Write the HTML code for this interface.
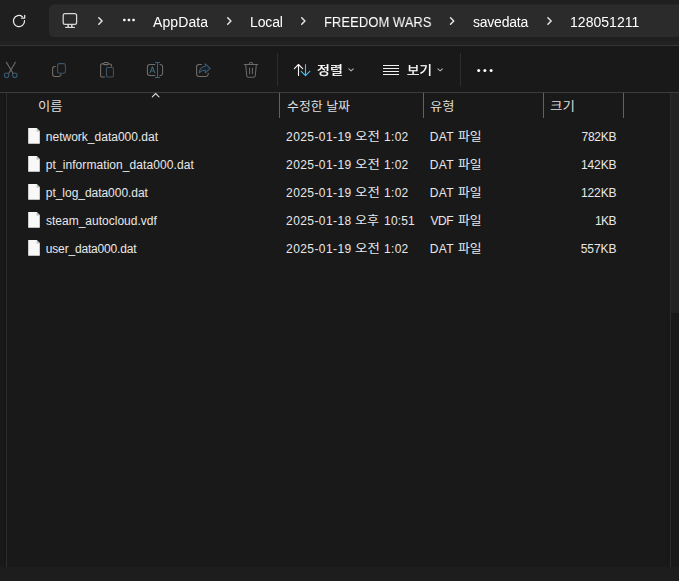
<!DOCTYPE html>
<html lang="ko"><head><meta charset="utf-8"><title>savedata</title>
<style>
html,body{margin:0;padding:0;}
body{width:679px;height:581px;overflow:hidden;background:#191919;position:relative;
 font-family:"Liberation Sans","Noto Sans CJK KR","NanumGothic",sans-serif;color:#fff;font-size:12px;}
.abs{position:absolute;}
.t{position:absolute;white-space:nowrap;line-height:16px;height:16px;}
.g{will-change:transform;}
.k{-webkit-text-stroke:0.25px #fff;}
</style></head><body>
<div class="abs" style="left:0;top:0;width:679px;height:45px;background:#1f1f1f"></div>
<div class="abs" style="left:0;top:41px;width:679px;height:4px;background:#222222"></div>
<div class="abs" style="left:49px;top:4px;width:640px;height:33px;background:#2b2b2b;border-radius:5px;box-sizing:border-box;border-top:1px solid #262626"></div>
<!-- refresh -->
<svg class="abs" style="left:9px;top:11px" width="20" height="20" viewBox="9 11 20 20" fill="none" stroke="#ececec" stroke-width="1.25" stroke-linecap="round" stroke-linejoin="round"><path d="M24.500 20.600A5.550 5.550 0 1 1 22.400 16.700"/><path d="M24.700 15.300v2.800h-3.200"/></svg>
<!-- monitor -->
<svg class="abs" style="left:60px;top:10px" width="22" height="22" viewBox="60 10 22 22" fill="none" stroke="#d8d8d8" stroke-width="1.25" stroke-linejoin="round"><rect x="63.200" y="13.500" width="13.400" height="10.900" rx="1.900"/><path d="M68.200 24.600v2.400M71.800 24.600v2.400" stroke-width="1.500"/><path d="M65.100 27.400h9.800" stroke-width="1.200"/></svg>
<!-- chevrons -->
<svg class="abs" style="left:0;top:0" width="679" height="45" viewBox="0 0 679 45" fill="none" stroke="#e6e6e6" stroke-width="1.450" stroke-linecap="round" stroke-linejoin="round">
<path d="M98.800 17.800l3.250 3.200-3.250 3.200"/>
<path d="M227.700 17.800l3.250 3.200-3.250 3.200"/>
<path d="M301.700 17.800l3.250 3.200-3.250 3.200"/>
<path d="M450.500 17.800l3.250 3.200-3.250 3.200"/>
<path d="M547.900 17.800l3.250 3.200-3.250 3.200"/>
<g fill="#f4f4f4" stroke="none"><rect x="123.100" y="18.850" width="2.500" height="2.400" rx="0.700"/><rect x="127.700" y="18.850" width="2.500" height="2.400" rx="0.700"/><rect x="132.300" y="18.850" width="2.500" height="2.400" rx="0.700"/></g>
</svg>
<div class="abs" style="left:0;top:45px;width:679px;height:1px;background:#363636"></div>
<div class="abs" style="left:0;top:92px;width:679px;height:1px;background:#3c3c3c"></div>
<!-- toolbar separators -->
<div class="abs" style="left:277px;top:53px;width:1px;height:33px;background:#2e2e2e"></div>
<div class="abs" style="left:460px;top:53px;width:1px;height:33px;background:#2e2e2e"></div>
<!-- toolbar icons -->
<svg class="abs" style="left:0;top:46px" width="679" height="46" viewBox="0 46 679 46" fill="none" stroke-width="1.050" stroke-linecap="round" stroke-linejoin="round">
<!-- cut -->
<g stroke="#707070"><path d="M6.400 62.300l6.700 11.100M15.400 62.300L8.700 73.400"/></g>
<g stroke="#37586d" stroke-width="1.150"><circle cx="6.600" cy="75.200" r="2.250"/><circle cx="14.800" cy="75.200" r="2.250"/></g>
<!-- copy -->
<path stroke="#736f6b" d="M55.300 66.500h-0.500a2.200 2.200 0 0 0-2.200 2.200v5.300a2.400 2.400 0 0 0 2.400 2.400h3.900a2.200 2.200 0 0 0 2.200-2"/>
<rect stroke="#3d5566" x="57.600" y="63.600" width="7.800" height="9.700" rx="1.900"/>
<!-- paste -->
<path stroke="#736f6b" d="M104.600 77h-2.700a1.300 1.300 0 0 1-1.300-1.300v-10.500a1.300 1.300 0 0 1 1.300-1.300h1.500M108.600 63.900h1.500a1.300 1.300 0 0 1 1.300 1.300v1.100"/>
<rect stroke="#736f6b" x="103.700" y="62.500" width="4.600" height="2.100" rx="1.050"/>
<rect stroke="#3d5566" x="106.500" y="67.400" width="6.900" height="9.600" rx="1.200"/>
<!-- rename -->
<path stroke="#736f6b" d="M154.800 64.500h-5a2.400 2.400 0 0 0-2.400 2.400v6.200a2.400 2.400 0 0 0 2.400 2.400h5M160 64.500h0.200a2.400 2.400 0 0 1 2.400 2.400v6.200a2.400 2.400 0 0 1-2.400 2.400h-0.200"/>
<path stroke="#3e6170" d="M157.500 62.600v14.800M155.400 62.400h4.200M155.400 77.500h4.200"/>
<path stroke="#3e6170" d="M149.900 72.900l2.500-6.100 2.500 6.100M150.800 71h3.200"/>
<!-- share -->
<path stroke="#736f6b" d="M201.400 64.500h-2.400a2.400 2.400 0 0 0-2.400 2.400v7.100a2.400 2.400 0 0 0 2.400 2.400h6.800a2.400 2.400 0 0 0 2.400-2.400v-0.800"/>
<path stroke="#3f5a6e" fill="#15232e" d="M205.300 63.800l4.900 4.500-4.900 4.500v-2.600c-3 0-4.900 0.900-6.200 2.700 0.400-3.500 2.400-6.200 6.200-6.600z"/>
<!-- delete -->
<g stroke="#6a6a6a"><path d="M244.300 64.500h13.400M249.200 64.300a1.800 1.800 0 0 1 3.600 0M245.700 64.700l1 10.800a1.900 1.900 0 0 0 1.900 1.700h4.800a1.900 1.900 0 0 0 1.900-1.700l1-10.800M249.600 68v5.800M252.400 68v5.800"/></g>
<!-- sort -->
<path stroke="#f6f6f6" stroke-width="1.100" d="M298.500 75.400v-10.600M294.300 68.700l4.200-4.200 4.200 4.200"/>
<path stroke="#52bdf2" stroke-width="1.100" d="M305.500 64.600v10.600M301.200 71.300l4.300 4.300 4.300-4.300"/>
<path stroke="#b4b4b4" d="M348.900 68.900l2.200 1.950 2.200-1.950"/>
<!-- view -->
<g fill="#f0f0f0" stroke="none"><rect x="383" y="65" width="16" height="1"/><rect x="383" y="68" width="16" height="1"/><rect x="383" y="71" width="16" height="1"/><rect x="383" y="74" width="16" height="1"/></g>
<path stroke="#b4b4b4" d="M437.900 68.900l2.250 2 2.250-2"/>
<g fill="#ffffff" stroke="none"><circle cx="478.700" cy="70.600" r="1.500"/><circle cx="484.900" cy="70.600" r="1.500"/><circle cx="491.100" cy="70.600" r="1.500"/></g>
</svg>
<!-- list area -->
<div class="abs" style="left:4px;top:93px;width:2px;height:474px;background:#171717"></div>
<div class="abs" style="left:6px;top:93px;width:1px;height:474px;background:#2c2c2c"></div>
<div class="abs" style="left:279px;top:93px;width:1px;height:25px;background:#626262"></div>
<div class="abs" style="left:423px;top:93px;width:1px;height:25px;background:#626262"></div>
<div class="abs" style="left:543px;top:93px;width:1px;height:25px;background:#626262"></div>
<div class="abs" style="left:623px;top:93px;width:1px;height:25px;background:#626262"></div>
<svg class="abs" style="left:150px;top:92px" width="12" height="8" viewBox="150 92 12 8" fill="none" stroke="#dadada" stroke-width="1.100" stroke-linecap="round" stroke-linejoin="round"><path d="M152.300 96.900l3.350-3.400 3.350 3.400"/></svg>
<div class="abs" style="left:666px;top:93px;width:5px;height:474px;background:#181818"></div>
<div class="abs" style="left:671px;top:93px;width:8px;height:220px;background:#222222"></div>
<div class="abs" style="left:0;top:567px;width:679px;height:14px;background:#1d1d1d"></div>
<div class="abs" style="left:670px;top:93px;width:1px;height:474px;background:#2c2c2c"></div>
<svg class="abs" style="left:28px;top:128px" width="12" height="16" viewBox="0 0 12 16"><path d="M0.200 0.100h8.600l3 3v12.700h-11.600z" fill="#f8f8f8"/><path d="M8.600 0.200v3.200h3.200z" fill="#b8b8b8"/></svg>
<svg class="abs" style="left:28px;top:156px" width="12" height="16" viewBox="0 0 12 16"><path d="M0.200 0.100h8.600l3 3v12.700h-11.600z" fill="#f8f8f8"/><path d="M8.600 0.200v3.200h3.200z" fill="#b8b8b8"/></svg>
<svg class="abs" style="left:28px;top:184px" width="12" height="16" viewBox="0 0 12 16"><path d="M0.200 0.100h8.600l3 3v12.700h-11.600z" fill="#f8f8f8"/><path d="M8.600 0.200v3.200h3.200z" fill="#b8b8b8"/></svg>
<svg class="abs" style="left:28px;top:212px" width="12" height="16" viewBox="0 0 12 16"><path d="M0.200 0.100h8.600l3 3v12.700h-11.600z" fill="#f8f8f8"/><path d="M8.600 0.200v3.200h3.200z" fill="#b8b8b8"/></svg>
<svg class="abs" style="left:28px;top:240px" width="12" height="16" viewBox="0 0 12 16"><path d="M0.200 0.100h8.600l3 3v12.700h-11.600z" fill="#f8f8f8"/><path d="M8.600 0.200v3.200h3.200z" fill="#b8b8b8"/></svg>

<span class="t g" style="left:153.12px;top:14px;font-size:14px;color:#ffffff;font-weight:normal;letter-spacing:0.097px">AppData</span>
<span class="t g" style="left:249.61px;top:14px;font-size:14px;color:#ffffff;font-weight:normal;letter-spacing:-0.137px">Local</span>
<span class="t g" style="left:323.78px;top:14px;font-size:14.5px;color:#ffffff;font-weight:normal;transform:scaleX(0.9001);transform-origin:0 0">FREEDOM WARS</span>
<span class="t g" style="left:472.76px;top:14px;font-size:14px;color:#ffffff;font-weight:normal;letter-spacing:-0.236px">savedata</span>
<span class="t g" style="left:569.67px;top:14px;font-size:14px;color:#ffffff;font-weight:normal;letter-spacing:0.034px">128051211</span>
<span class="t g k" style="left:317.03px;top:63px;font-size:12px;color:#fff;font-weight:normal;transform:scaleX(1.1666);transform-origin:0 0">정렬</span>
<span class="t g k" style="left:406.50px;top:63px;font-size:12px;color:#fff;font-weight:normal;transform:scaleX(1.1264);transform-origin:0 0">보기</span>
<span class="t" style="left:38.00px;top:99px;font-size:12.5px;color:#dedede;font-weight:normal;transform:scaleX(1.0649);transform-origin:0 0">이름</span>
<span class="t" style="left:286.66px;top:99px;font-size:12.5px;color:#dedede;font-weight:normal;transform:scaleX(1.0330);transform-origin:0 0">수정한 날짜</span>
<span class="t" style="left:430.23px;top:99px;font-size:12.5px;color:#dedede;font-weight:normal;transform:scaleX(1.0659);transform-origin:0 0">유형</span>
<span class="t" style="left:549.82px;top:99px;font-size:12.5px;color:#dedede;font-weight:normal;transform:scaleX(1.0833);transform-origin:0 0">크기</span>
<span class="t" style="left:45.79px;top:129px;font-size:12px;color:#e8e8e8;font-weight:normal;letter-spacing:0.008px">network_data000.dat</span>
<span class="t" style="left:286.07px;top:129px;font-size:12px;color:#e8e8e8;font-weight:normal;letter-spacing:0.41px">2025-01-19</span>
<span class="t" style="left:355.33px;top:129px;font-size:12.5px;color:#e8e8e8;font-weight:normal;transform:scaleX(1.0764);transform-origin:0 0">오전</span>
<span class="t" style="left:384.10px;top:129px;font-size:12px;color:#e8e8e8;font-weight:normal;letter-spacing:0.275px">1:02</span>
<span class="t" style="left:429.70px;top:129px;font-size:12px;color:#e8e8e8;font-weight:normal;letter-spacing:0.371px">DAT</span>
<span class="t" style="left:458.29px;top:129px;font-size:12.5px;color:#e8e8e8;font-weight:normal;transform:scaleX(1.0262);transform-origin:0 0">파일</span>
<span class="t" style="left:581.47px;top:129px;font-size:12px;color:#e8e8e8;font-weight:normal;letter-spacing:-0.249px">782KB</span>
<span class="t" style="left:45.81px;top:157px;font-size:12px;color:#e8e8e8;font-weight:normal;letter-spacing:0.073px">pt_information_data000.dat</span>
<span class="t" style="left:286.07px;top:157px;font-size:12px;color:#e8e8e8;font-weight:normal;letter-spacing:0.41px">2025-01-19</span>
<span class="t" style="left:355.33px;top:157px;font-size:12.5px;color:#e8e8e8;font-weight:normal;transform:scaleX(1.0764);transform-origin:0 0">오전</span>
<span class="t" style="left:384.10px;top:157px;font-size:12px;color:#e8e8e8;font-weight:normal;letter-spacing:0.275px">1:02</span>
<span class="t" style="left:429.70px;top:157px;font-size:12px;color:#e8e8e8;font-weight:normal;letter-spacing:0.371px">DAT</span>
<span class="t" style="left:458.29px;top:157px;font-size:12.5px;color:#e8e8e8;font-weight:normal;transform:scaleX(1.0262);transform-origin:0 0">파일</span>
<span class="t" style="left:581.00px;top:157px;font-size:12px;color:#e8e8e8;font-weight:normal;letter-spacing:-0.131px">142KB</span>
<span class="t" style="left:45.81px;top:185px;font-size:12px;color:#e8e8e8;font-weight:normal;letter-spacing:-0.037px">pt_log_data000.dat</span>
<span class="t" style="left:286.07px;top:185px;font-size:12px;color:#e8e8e8;font-weight:normal;letter-spacing:0.41px">2025-01-19</span>
<span class="t" style="left:355.33px;top:185px;font-size:12.5px;color:#e8e8e8;font-weight:normal;transform:scaleX(1.0764);transform-origin:0 0">오전</span>
<span class="t" style="left:384.10px;top:185px;font-size:12px;color:#e8e8e8;font-weight:normal;letter-spacing:0.275px">1:02</span>
<span class="t" style="left:429.70px;top:185px;font-size:12px;color:#e8e8e8;font-weight:normal;letter-spacing:0.371px">DAT</span>
<span class="t" style="left:458.29px;top:185px;font-size:12.5px;color:#e8e8e8;font-weight:normal;transform:scaleX(1.0262);transform-origin:0 0">파일</span>
<span class="t" style="left:581.00px;top:185px;font-size:12px;color:#e8e8e8;font-weight:normal;letter-spacing:-0.131px">122KB</span>
<span class="t" style="left:46.02px;top:213px;font-size:12px;color:#e8e8e8;font-weight:normal;letter-spacing:-0.0px">steam_autocloud.vdf</span>
<span class="t" style="left:286.07px;top:213px;font-size:12px;color:#e8e8e8;font-weight:normal;letter-spacing:0.413px">2025-01-18</span>
<span class="t" style="left:355.35px;top:213px;font-size:12.5px;color:#e8e8e8;font-weight:normal;transform:scaleX(1.0406);transform-origin:0 0">오후</span>
<span class="t" style="left:384.10px;top:213px;font-size:12px;color:#e8e8e8;font-weight:normal;letter-spacing:0.161px">10:51</span>
<span class="t" style="left:430.52px;top:213px;font-size:12px;color:#e8e8e8;font-weight:normal;letter-spacing:-0.456px">VDF</span>
<span class="t" style="left:458.29px;top:213px;font-size:12.5px;color:#e8e8e8;font-weight:normal;transform:scaleX(1.0262);transform-origin:0 0">파일</span>
<span class="t" style="left:595.00px;top:213px;font-size:12px;color:#e8e8e8;font-weight:normal;letter-spacing:-0.65px">1KB</span>
<span class="t" style="left:45.81px;top:241px;font-size:12px;color:#e8e8e8;font-weight:normal;letter-spacing:-0.173px">user_data000.dat</span>
<span class="t" style="left:286.07px;top:241px;font-size:12px;color:#e8e8e8;font-weight:normal;letter-spacing:0.41px">2025-01-19</span>
<span class="t" style="left:355.33px;top:241px;font-size:12.5px;color:#e8e8e8;font-weight:normal;transform:scaleX(1.0764);transform-origin:0 0">오전</span>
<span class="t" style="left:384.10px;top:241px;font-size:12px;color:#e8e8e8;font-weight:normal;letter-spacing:0.275px">1:02</span>
<span class="t" style="left:429.70px;top:241px;font-size:12px;color:#e8e8e8;font-weight:normal;letter-spacing:0.371px">DAT</span>
<span class="t" style="left:458.29px;top:241px;font-size:12.5px;color:#e8e8e8;font-weight:normal;transform:scaleX(1.0262);transform-origin:0 0">파일</span>
<span class="t" style="left:580.77px;top:241px;font-size:12px;color:#e8e8e8;font-weight:normal;letter-spacing:-0.073px">557KB</span>
</body></html>
